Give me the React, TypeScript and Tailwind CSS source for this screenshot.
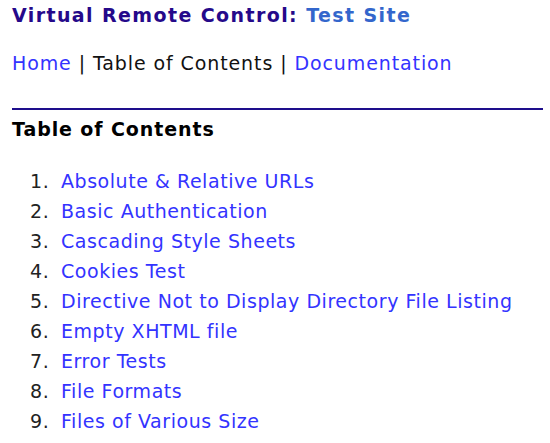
const items = [
  'Absolute & Relative URLs',
  'Basic Authentication',
  'Cascading Style Sheets',
  'Cookies Test',
  'Directive Not to Display Directory File Listing',
  'Empty XHTML file',
  'Error Tests',
  'File Formats',
  'Files of Various Size',
];

export default function App() {
  return (
    <div className="w-[550px] h-[443px] overflow-hidden bg-white font-['DejaVu_Sans',sans-serif] pl-[12px] pr-[7px] pt-[4px]">
      <h1 className="text-[19px] font-bold leading-[22px] tracking-[1.4px] text-[#25098a]">
        Virtual Remote Control: <span className="text-[#3366cc]">Test Site</span>
      </h1>
      <div className="mt-[26px] text-[19px] leading-[22px] tracking-[0.9px] text-[#111]">
        <a className="text-[#3333ff]">Home</a> | Table of Contents |{' '}
        <a className="text-[#3333ff]">Documentation</a>
      </div>
      <hr className="mt-[34px] border-0 h-[2px] bg-[#1e0e8c]" />
      <h2 className="mt-[8px] text-[19px] font-bold leading-[22px] tracking-[0.9px] text-black">Table of Contents</h2>
      <ol className="mt-[30px] ml-[18px]">
        {items.map((t, i) => (
          <li key={t} className="flex h-[30px] text-[19px] leading-[22px] tracking-[0.55px]">
            <span className="w-[31px] text-right pr-[13px] text-[#222] shrink-0">{i + 1}.</span>
            <a className="text-[#3333ff]">{t}</a>
          </li>
        ))}
      </ol>
    </div>
  );
}
